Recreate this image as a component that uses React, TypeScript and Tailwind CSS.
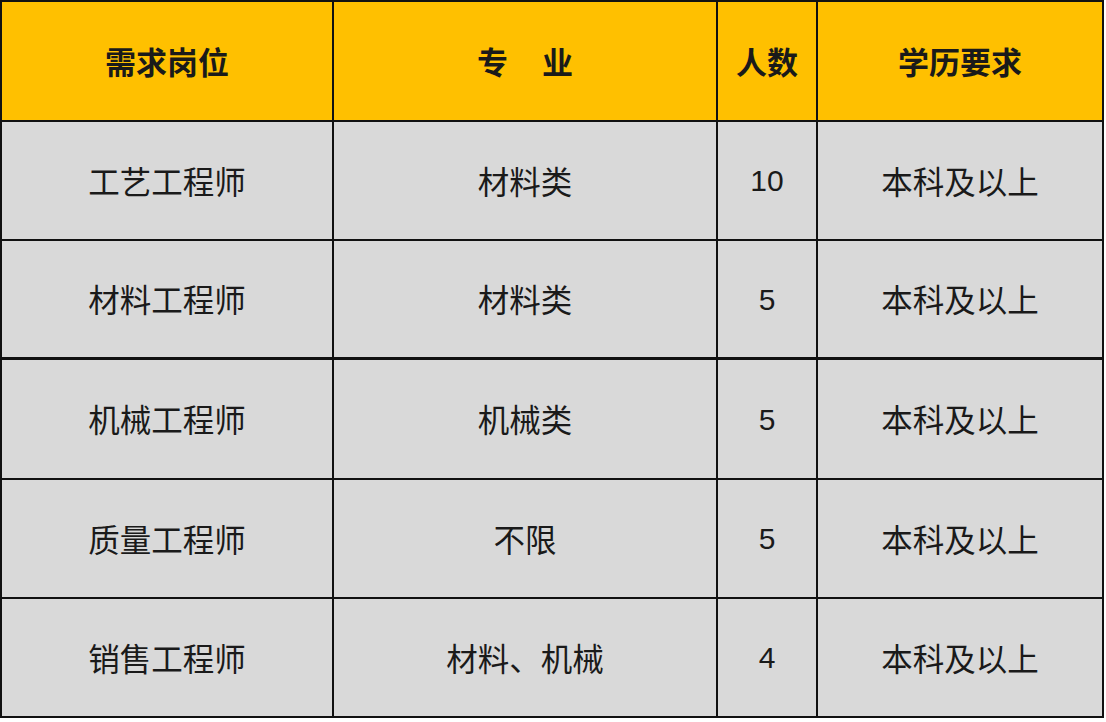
import React from "react";

const rows = [
  ["工艺工程师", "材料类", "10", "本科及以上"],
  ["材料工程师", "材料类", "5", "本科及以上"],
  ["机械工程师", "机械类", "5", "本科及以上"],
  ["质量工程师", "不限", "5", "本科及以上"],
  ["销售工程师", "材料、机械", "4", "本科及以上"],
];

const heights = ["h-[117px]", "h-[116px]", "h-[118px]", "h-[117px]", "h-[117px]"];

export default function App() {
  return (
    <div
      className="w-[1106px] h-[722px] bg-white"
      style={{ fontFamily: '"Noto Sans CJK SC", "Noto Sans", sans-serif' }}
    >
      <div className="w-[1104px] bg-[#111] p-[2px] flex flex-col">
        <div className="grid grid-cols-[330px_382px_98px_284px] gap-x-[2px] h-[118px] text-[31px] font-semibold text-[#1a1a1a]">
          <div className="bg-[#FFC000] flex items-center justify-center">需求岗位</div>
          <div className="bg-[#FFC000] flex items-center justify-center gap-[34px]">
            <span>专</span>
            <span>业</span>
          </div>
          <div className="bg-[#FFC000] flex items-center justify-center">人数</div>
          <div className="bg-[#FFC000] flex items-center justify-center">学历要求</div>
        </div>
        {rows.map((r, i) => (
          <div
            key={i}
            className={`grid grid-cols-[330px_382px_98px_284px] gap-x-[2px] ${heights[i]} ${i === 2 ? "mt-[3px]" : "mt-[2px]"} text-[31.5px] text-[#1a1a1a]`}
          >
            {r.map((c, j) => (
              <div key={j} className="bg-[#D9D9D9] flex items-center justify-center">
                <span style={j === 2 ? { fontFamily: '"Liberation Sans", Arial, sans-serif', fontSize: 30 } : undefined}>{c}</span>
              </div>
            ))}
          </div>
        ))}
      </div>
    </div>
  );
}
